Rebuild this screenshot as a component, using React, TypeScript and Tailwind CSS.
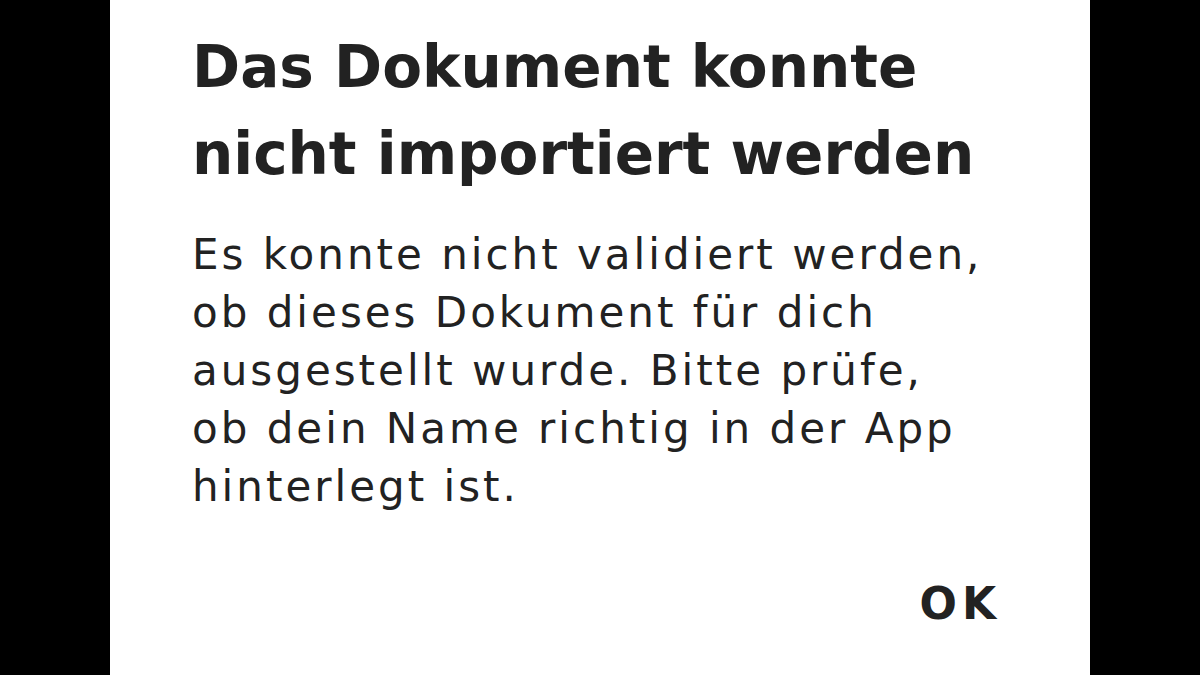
export default function App() {
  return (
    <div className="flex h-[675px] w-[1200px] bg-black">
      <div className="flex h-full w-[980px] ml-[110px] flex-col bg-white pl-[82px] pt-[24px] text-[#222222] font-['DejaVu_Sans',sans-serif]">
        <h1 className="text-[58px] font-bold leading-[87px]">
          Das Dokument konnte
          <br />
          nicht importiert werden
        </h1>
        <p className="mt-[28px] text-[42px] leading-[58px] tracking-[3px]">
          Es konnte nicht validiert werden,
          <br />
          ob dieses Dokument für dich
          <br />
          ausgestellt wurde. Bitte prüfe,
          <br />
          ob dein Name richtig in der App
          <br />
          hinterlegt ist.
        </p>
        <div className="mt-[55px] flex justify-end pr-[89px]">
          <button className="text-[44px] font-bold tracking-[5px]">OK</button>
        </div>
      </div>
    </div>
  )
}
